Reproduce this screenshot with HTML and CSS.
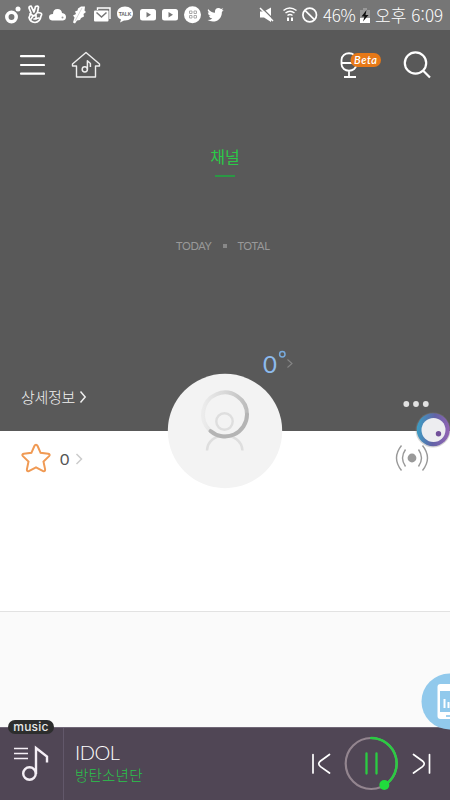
FILE: index.html
```html
<!DOCTYPE html>
<html lang="ko">
<head>
<meta charset="utf-8">
<title>Music channel</title>
<link rel="stylesheet" href="styles.css">
</head>
<body>
<div class="screen">
  <header class="status">
    <svg class="status-icons" width="230" height="30" viewBox="0 0 230 30" fill="#fff">
      <circle cx="11.500" cy="17" r="4.700" fill="none" stroke="#fff" stroke-width="3.500"/><circle cx="18" cy="9" r="2.500"/>
      <g fill="none" stroke="#fff" stroke-width="1.700" stroke-linejoin="round" stroke-linecap="round"><path d="M31 13L29 8q0-2 2-2L34 12 35.500 6.500q2.500-1 3 .500L37.500 12.500l3 .5q2 1 .500 3-1 6-6 6.500-5-.500-6-5z"/><path d="M30 14l4 2 3-3M33 16l-2 3M34 19l5-1M36 15v4"/></g>
      <path d="M52 20.500q-3-.500-3-3.500 0-3 4-3 0-5 4.500-5 4 0 4.500 4 4 .500 4 4 0 3-3 3.500z"/><circle cx="62.500" cy="17.500" r="1" fill="#999"/>
      <path d="M73 22.500l1.500-5-1.500-2 3-1.500-1-2.500 2.500-1 .5-2 3-2 4 0-.5 4 1.500 1.500-2.500 2 .5 2.500-3 1.500-1 2-3 .5-2 3z"/><path d="M75 21l7-13" stroke="#bbb" stroke-width=".6"/>
      <path d="M97.500 10V8H110v11" fill="none" stroke="#fff" stroke-width="1.400"/><rect x="94" y="10.500" width="14.500" height="11" rx="1"/><path d="M96.500 12.500l5 4.500 5-4.500" fill="none" stroke="#777" stroke-width="1.500"/>
      <path d="M125 6.500c5 0 8 3 8 7s-3 7-8 7h-1l-4 2 1-3c-3-1-4-3-4-6 0-4 3-7 8-7z"/>
      <text class="talk" x="118.800" y="15.700" textLength="12.500" fill="#666">TALK</text>
      <rect x="140" y="9" width="16" height="11.500" rx="2.500"/><path d="M146.500 12v5.500l4.500-2.700z" fill="#777"/>
      <rect x="162" y="9" width="16" height="11.500" rx="2.500"/><path d="M168.500 12v5.500l4.500-2.700z" fill="#777"/>
      <circle cx="192.500" cy="14.700" r="8.500"/><path d="M189.500 11h2.500v2.500h-2.500zM194 11h2.500v2.500H194zM189.500 15.500h2.500V18h-2.500zM194 15.500h2.500V18H194z" fill="none" stroke="#aaa"/>
      <path d="M208 9q3 3.500 7 3.700c-.5-3 1-4.700 3.500-4.700q1.500 0 2.500 1l2.300-.8-1.500 2 1.800-.3-1.700 2c0 6-4 9.600-9 9.600q-3 0-5.400-1.400 3 0 4.800-1.600-2.700-.3-3.300-2.500h1.600q-2.700-1-2.800-3.700l1.600.4q-2.500-1.800-1.400-3.700z"/>
    </svg>
    <svg class="signal-icons" width="63" height="30" viewBox="257 0 63 30" fill="#fff">
      <path d="M260 11.500h4l7-4v14.500l-7-4.500h-4z"/><path d="M261 7l13 13" stroke="#777" stroke-width="1.400"/><path d="M260 8l13 13" stroke="#fff" stroke-width="1.500"/>
      <g fill="none" stroke="#fff" stroke-width="1.500"><path d="M283.500 10.500q6-5 13 0M285.500 13q4.500-3.500 9 0M287.500 15.500q2.500-2 5 0"/><path d="M288 21v-3.500M292 17.500V21" stroke-width="2"/><circle cx="309.700" cy="15" r="6.800" stroke-width="1.700"/><path d="M305 10.300l9.400 9.400" stroke-width="1.700"/></g>
    </svg>
    <span class="percent">46%</span>
    <svg class="battery" width="10" height="15" viewBox="0 0 10 15"><path d="M0 2h3V0h4v2h3v13H0z" fill="#999"/><path d="M0 10h10v5H0z" fill="#fff"/><path d="M6.500 2L1.500 8.500h3L3 13.500l5.500-6.500H5.500z" fill="#111"/></svg>
    <span class="clock">오후 6:09</span>
  </header>

  <section class="hero">
    <nav class="toolbar">
      <svg class="menu" width="26" height="30" viewBox="19 50 26 30"><path d="M21 56.200h23M21 65h23M21 73.700h23" stroke="#fff" stroke-width="2.200" stroke-linecap="round"/></svg>
      <svg class="home" width="30" height="30" viewBox="71 50 30 30" fill="none" stroke="#eee" stroke-width="1.400" stroke-linejoin="round"><path d="M86 52.500l13.500 11.500v2h-4v11h-19V66h-4v-2z"/><circle cx="84.800" cy="69.300" r="2.600" stroke-width="1.500"/><path d="M87.400 69.300v-8.500l3 2.700V67" stroke-width="1.500"/></svg>
      <svg class="mic" width="44" height="32" viewBox="339 50 44 32"><g fill="none" stroke="#fff" stroke-width="1.800"><path d="M341.500 60c0-9 15-9 15 0v4c0 9-15 9-15 0zM341.500 63h15M349 71v6M344 77h12"/></g><rect x="350.500" y="53" width="30.500" height="14" rx="7" fill="#e67817"/><text class="beta" x="354" y="64" textLength="23" fill="#fff">Beta</text></svg>
      <svg class="search" width="30" height="30" viewBox="403 50 30 30" fill="none" stroke="#fff" stroke-width="2.200"><circle cx="415.500" cy="63" r="10.700"/><path d="M423 70.500l7 7"/></svg>
    </nav>
    <h1 class="channel">채널</h1>
    <div class="counts"><span>TODAY</span><i></i><span>TOTAL</span></div>
    <div class="temperature"><span>0</span><svg width="17" height="20" viewBox="277 348 17 20" fill="none"><circle cx="281.300" cy="354.200" r="2.700" stroke="#77aadd" stroke-width="1.500"/><path d="M286.500 359.500l4.500 4-4.500 4" stroke="#858585" stroke-width="1.100"/></svg></div>
    <div class="hero-foot">
      <div class="details"><span>상세정보</span><svg width="8" height="14" viewBox="0 0 8 14"><path d="M1.500 1.500Q4 4.500 6.200 7 4 9.500 1.500 12.500" fill="none" stroke="#eee" stroke-width="1.500"/></svg></div>
      <svg class="more" width="28" height="8" viewBox="0 0 28 8" fill="#e2e2e2"><circle cx="4.300" cy="4" r="2.900"/><circle cx="14" cy="4" r="2.900"/><circle cx="23.800" cy="4" r="2.900"/></svg>
    </div>
  </section>

  <section class="profile">
    <svg class="star" width="34" height="32" viewBox="19 442 34 32"><path d="M36 444.700q1 0 1.600 1.300l3 6.800 7.600.9q2.400.6.900 2.400l-5.600 5.500 1.600 7.800q.2 2.500-2 1.700L36 467.300l-7.100 3.800q-2.200.8-2-1.700l1.600-7.800-5.600-5.500q-1.500-1.800.9-2.400l7.600-.9 3-6.800q.6-1.300 1.600-1.300z" fill="none" stroke="#f09a54" stroke-width="2"/></svg>
    <span class="likes">0</span>
    <svg class="next" width="8" height="12" viewBox="0 0 8 12"><path d="M1.500 1l5 5-5 5" fill="none" stroke="#ccc" stroke-width="1.500"/></svg>
    <svg class="live" width="36" height="30" viewBox="394 443 36 30" fill="none" stroke="#999" stroke-width="1.400"><circle cx="412" cy="458" r="4.400" fill="#999" stroke="none"/><path d="M405.500 449.500q-6 8.500 0 17M418.500 449.500q6 8.500 0 17M401.500 445.500q-10 12.500 0 25M422.500 445.500q10 12.500 0 25"/></svg>
    <svg class="avatar" width="116" height="116" viewBox="167 373 116 116" fill="none">
      <defs><linearGradient id="spin" gradientUnits="userSpaceOnUse" x1="203" y1="0" x2="247" y2="0"><stop offset="0" stop-color="#ececec"/><stop offset=".5" stop-color="#d8d8d8"/><stop offset="1" stop-color="#bcbcbc"/></linearGradient></defs>
      <circle cx="225" cy="431" r="57.200" fill="#f3f3f3"/><circle cx="224.500" cy="421.500" r="8.200" stroke="#dedede" stroke-width="2.400"/><path d="M207 450.500c1-20 34-20 35.500 0" stroke="#dedede" stroke-width="2.500"/>
      <path d="M210 430.600A22 22 0 1 1 247 415" stroke="url(#spin)" stroke-width="4"/><path d="M247 414.500A22 22 0 0 1 210.500 431" stroke="#b4b4b4" stroke-width="4" stroke-linecap="round"/>
    </svg>
    <svg class="assistant" width="38" height="38" viewBox="414 411 38 38"><defs><linearGradient id="ring" x1="0" x2="1" y1=".6" y2=".7"><stop stop-color="#3c9dc4"/><stop offset=".5" stop-color="#6263a6"/><stop offset="1" stop-color="#9464b5"/></linearGradient></defs><circle cx="433" cy="430" r="17.500" fill="#888" opacity=".35"/><circle cx="433.200" cy="429.700" r="16.500" fill="url(#ring)"/><circle cx="433.500" cy="430" r="12" fill="#ededf0"/><circle cx="438.500" cy="433.700" r="2.700" fill="#72509a"/></svg>
  </section>

  <section class="feed">
    <svg class="stats" width="29" height="58" viewBox="421 673 29 58"><circle cx="449.500" cy="701.500" r="28" fill="#91c9ec"/><rect x="437.500" y="684" width="22" height="35" rx="3" fill="#fff"/><path d="M440 691h18v21h-18z" fill="#91c9ec"/><path d="M444.500 708v-9M448.500 708v-6" stroke="#fff" stroke-width="2"/><path d="M446 716h7" stroke="#91c9ec" stroke-width="1.700"/></svg>
  </section>

  <footer class="player">
    <div class="playlist"><span class="badge">music</span><svg width="38" height="40" viewBox="12 744 38 40" fill="none" stroke="#f4eef5"><path d="M14 748.500h14M14 753.500h14M14 758.500h14" stroke-width="1.500"/><circle cx="29.500" cy="773.500" r="6.300" stroke-width="2.400"/><path d="M36 774v-26l11 8.500v6" stroke-width="2.400"/></svg></div>
    <div class="track"><strong>IDOL</strong><span>방탄소년단</span></div>
    <svg class="controls" width="130" height="60" viewBox="308 734 130 60" fill="none" stroke="#fff" stroke-width="1.700" stroke-linecap="round"><path d="M313 754.500v18.500M329.500 754.500l-9 6.500q-3.500 2.800 0 5.600l9 6.400M429.500 754.500v18.500M413.500 754.500l9 6.500q3.500 2.800 0 5.600l-9 6.400"/><circle cx="371.200" cy="763.500" r="25.500" stroke="#93858f" stroke-width="2.200"/><path d="M371.200 738a25.500 25.500 0 0 1 13 47.400" stroke="#2bcb42" stroke-width="2.500"/><path d="M366.500 753.500v20M376.500 753.500v20" stroke="#2bcb42" stroke-width="2.300"/><circle cx="384.300" cy="785" r="5" fill="#20dc3c" stroke="none"/></svg>
  </footer>
</div>
</body>
</html>
```

FILE: styles.css
```css
* { box-sizing: border-box; }
body { margin: 0; font-family: "Noto Sans CJK KR", sans-serif; font-weight: 300; }
svg { display: block; flex: none; }
.screen { width: 450px; height: 800px; overflow: hidden; display: flex; flex-direction: column; background: #fafafa; }

.status { height: 30px; flex: none; background: #767676; color: #fff; display: flex; align-items: center; white-space: nowrap; }
.signal-icons { margin-left: 27px; }
.talk { font: bold 5px "Liberation Sans", sans-serif; }
.percent { width: 36px; margin-left: 3px; font-size: 17px; line-height: 28px; letter-spacing: -.3px; }
.battery { margin: 1px 5px 0 1px; }
.clock { font-size: 17px; line-height: 28px; letter-spacing: .1px; }

.hero { height: 401px; flex: none; background: #595959; display: flex; flex-direction: column; }
.toolbar { height: 60px; padding: 20px 17px 0 19px; display: flex; align-items: flex-start; flex: none; }
.home { margin-left: 26px; }
.mic { margin-left: auto; margin-right: 20px; }
.beta { font: italic 600 11px Lato, sans-serif; }
.channel { align-self: center; margin: 54px 0 0; height: 33px; width: 32px; font-size: 16px; line-height: 24px; font-weight: 400; text-align: center; color: #2bcb48; white-space: nowrap; }
.channel::after { content: ""; display: block; width: 20px; height: 2px; margin: 7px auto 0; background: #2a9844; }
.counts { margin: 61px 0 0 176px; height: 16px; display: flex; align-items: center; color: #999; font: 400 11px/16px Lato, sans-serif; letter-spacing: -.25px; }
.counts i { width: 4px; height: 4px; margin: 0 10px 0 12px; background: #888; }
.temperature { margin: 94px 0 0 263px; height: 32px; display: flex; color: #8dbbed; font: 400 24px/31px Lato, sans-serif; }
.temperature span { width: 15px; }
.temperature svg { margin-left: 0; }
.hero-foot { margin-top: 4px; padding: 0 20px 0 21px; display: flex; justify-content: space-between; }
.details { display: flex; align-items: center; gap: 4px; height: 26px; font-size: 15px; line-height: 26px; letter-spacing: -.3px; color: #f3f3f3; }
.more { margin-top: 16px; }

.profile { position: relative; height: 181px; flex: none; background: #fff; border-bottom: 1px solid #e2e2e2; padding: 11px 20px 0 19px; display: flex; align-items: flex-start; }
.likes { width: 10px; margin: 5px 0 0 7px; font: 400 16px/24px Lato, sans-serif; color: #555; }
.next { margin: 11px 0 0 5px; }
.live { margin: 1px 0 0 auto; }
.avatar { position: absolute; left: 167px; top: -58px; }
.assistant { position: absolute; left: 414px; top: -20px; }

.feed { height: 115px; flex: none; position: relative; }
.stats { position: absolute; right: 0; top: 61px; z-index: 1; }

.player { position: relative; height: 73px; flex: none; background: #504655; border-top: 1px solid #706777; display: flex; }
.playlist { width: 64px; height: 72px; border-right: 1px solid #62586a; padding: 16px 0 0 12px; }
.badge { position: absolute; left: 8px; top: -8px; width: 46px; height: 14px; border-radius: 7px; background: #2c2d2d; color: #e8e8e8; font: 500 12px/13px Inter, sans-serif; letter-spacing: .2px; text-align: center; }
.track { padding: 12px 0 0 11px; display: flex; flex-direction: column; }
.track strong { font: 300 20px/25px Lato, sans-serif; letter-spacing: -.5px; color: #fff; }
.track span { font-size: 14.5px; line-height: 20px; letter-spacing: .2px; color: #29c44a; }
.controls { margin: 6px 12px 0 auto; }
```
